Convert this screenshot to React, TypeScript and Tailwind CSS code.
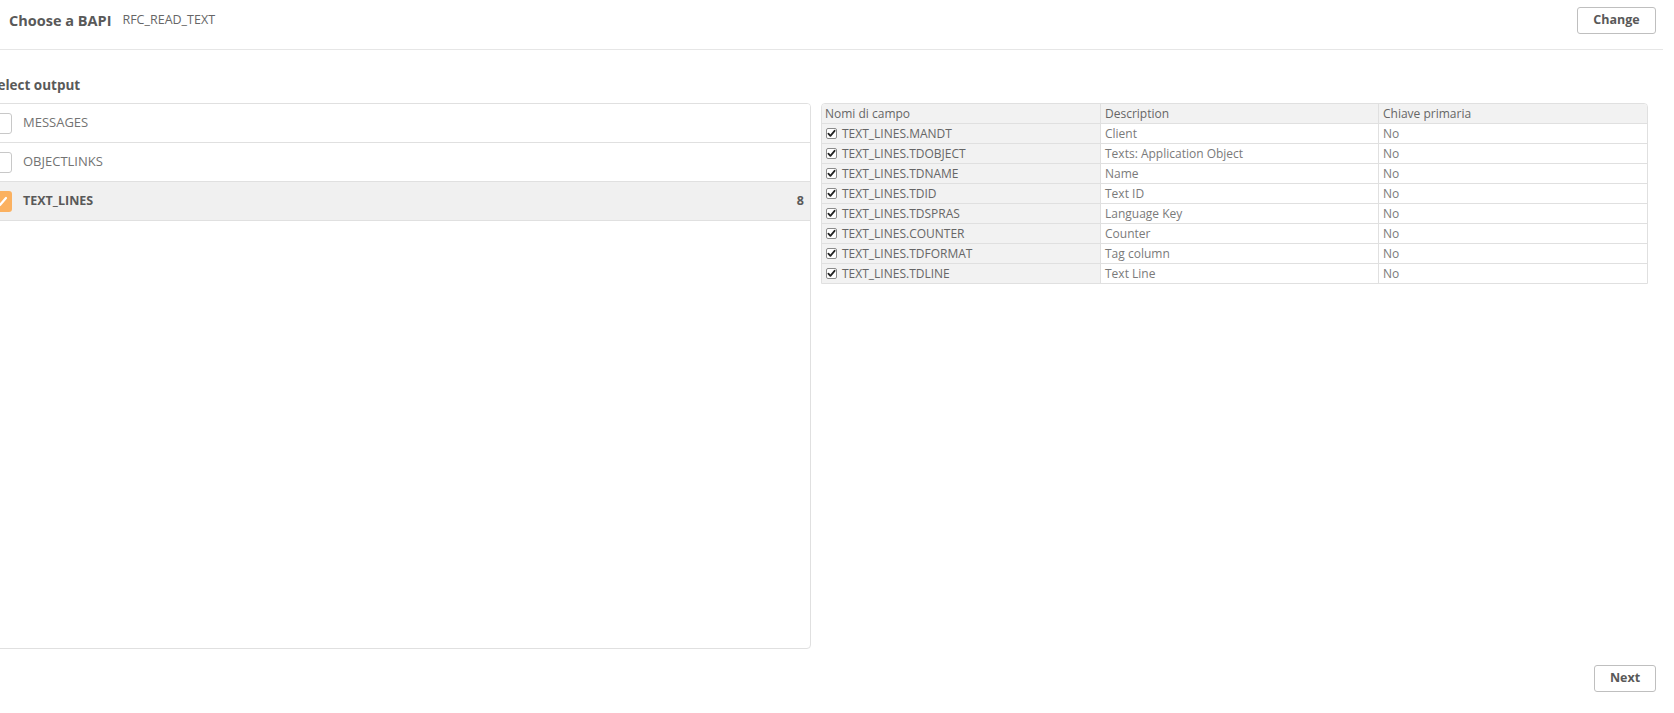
import React from "react";

const fields = [
  ["TEXT_LINES.MANDT", "Client"],
  ["TEXT_LINES.TDOBJECT", "Texts: Application Object"],
  ["TEXT_LINES.TDNAME", "Name"],
  ["TEXT_LINES.TDID", "Text ID"],
  ["TEXT_LINES.TDSPRAS", "Language Key"],
  ["TEXT_LINES.COUNTER", "Counter"],
  ["TEXT_LINES.TDFORMAT", "Tag column"],
  ["TEXT_LINES.TDLINE", "Text Line"],
];

function SmallCheck() {
  return (
    <svg width="11" height="11" viewBox="0 0 11 11" className="shrink-0">
      <rect x="0.5" y="0.5" width="10" height="10" rx="1.5" fill="#fff" stroke="#8a8a8a" />
      <path d="M2.4 5.6 L4.4 7.8 L8.6 2.8" fill="none" stroke="#222" strokeWidth="1.8" strokeLinecap="round" strokeLinejoin="round" />
    </svg>
  );
}

function ListRow({ label, checked, count }: { label: string; checked?: boolean; count?: string }) {
  return (
    <div
      className={
        "h-[39px] border-b border-[#e0e0e0] flex items-center pl-[10px] pr-[6px] " +
        (checked ? "bg-[#f0f0f0]" : "bg-white")
      }
    >
      {checked ? (
        <div className="w-[21px] h-[21px] rounded-[3px] bg-[#fbb160] flex items-center justify-center">
          <svg width="13" height="13" viewBox="0 0 13 13">
            <path d="M2 7 L5 10 L11 3" fill="none" stroke="#fff" strokeWidth="2.2" strokeLinecap="round" strokeLinejoin="round" />
          </svg>
        </div>
      ) : (
        <div className="w-[21px] h-[21px] rounded-[3px] border border-[#c8c8c8] bg-white" />
      )}
      <span
        className={
          "ml-[11px] " +
          (checked ? "text-[12.5px] font-bold text-[#595959]" : "text-[13px] text-[#737373]")
        }
      >
        {label}
      </span>
      {count && <span className="ml-auto text-[12.5px] font-bold text-[#595959]">{count}</span>}
    </div>
  );
}

export default function App() {
  return (
    <div className="w-[1674px] h-[713px] overflow-hidden bg-white font-['Open_Sans','Liberation_Sans',sans-serif] text-[#595959]">
      <header className="h-[50px] border-b border-[#e6e6e6] mr-[11px] pr-[7px] pt-[7px] flex items-start justify-between">
        <div className="h-[27px] flex items-center pl-[9px] gap-[11px]">
          <span className="text-[14.5px] font-bold text-[#595959]">Choose a BAPI</span>
          <span className="text-[12.5px] text-[#666]">RFC_READ_TEXT</span>
        </div>
        <button className="h-[27px] w-[79px] rounded-[3px] border border-[#bfbfbf] bg-white text-[12.5px] font-bold text-[#595959]">
          Change
        </button>
      </header>

      <div className="ml-[-10px] pt-[26px] h-[53px]">
        <h2 className="text-[13.5px] leading-[19px] font-bold text-[#595959]">Select output</h2>
      </div>

      <div className="flex ml-[-20px] mr-[26px] gap-[10px]">
        <div className="w-[831px] h-[546px] shrink-0 rounded-[4px] border border-[#e0e0e0] overflow-hidden">
          <ListRow label="MESSAGES" />
          <ListRow label="OBJECTLINKS" />
          <ListRow label="TEXT_LINES" checked count="8" />
        </div>

        <div className="flex-1 self-start">
          <div className="border border-[#e0e0e0] rounded-t-[4px] overflow-hidden text-[12px]">
            <div className="grid grid-cols-[279px_278px_1fr] h-[19px] bg-[#f2f2f2] text-[#666] leading-[19px]">
              <div className="pl-[3px] border-r border-[#e0e0e0]">Nomi di campo</div>
              <div className="pl-[4px] border-r border-[#e0e0e0]">Description</div>
              <div className="pl-[4px]">Chiave primaria</div>
            </div>
            {fields.map(([f, d]) => (
              <div
                key={f}
                className="grid grid-cols-[279px_278px_1fr] h-[20px] border-t border-[#e0e0e0] leading-[19px]"
              >
                <div className="bg-[#f2f2f2] border-r border-[#e0e0e0] flex items-center pl-[4px] gap-[5px] text-[#666]">
                  <SmallCheck />
                  <span>{f}</span>
                </div>
                <div className="pl-[4px] border-r border-[#e0e0e0] text-[#7a7a7a]">{d}</div>
                <div className="pl-[4px] text-[#7a7a7a]">No</div>
              </div>
            ))}
          </div>
        </div>
      </div>

      <div className="flex justify-end mr-[18px] mt-[16px]">
        <button className="h-[27px] w-[62px] rounded-[3px] border border-[#bfbfbf] bg-white text-[12.5px] font-bold text-[#595959]">
          Next
        </button>
      </div>
    </div>
  );
}
